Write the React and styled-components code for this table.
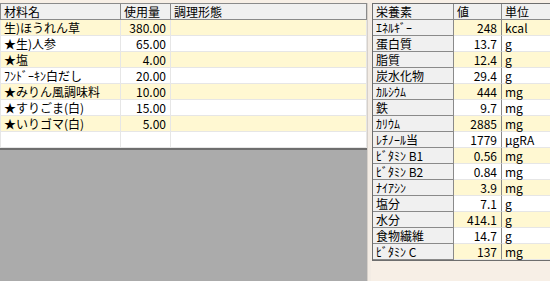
import styled, { createGlobalStyle } from 'styled-components';

const ingredients = [
  { name: '生)ほうれん草', amount: '380.00' },
  { name: '★生)人参', amount: '65.00' },
  { name: '★塩', amount: '4.00' },
  { name: 'ﾌﾝﾄﾞｰｷﾝ白だし', amount: '20.00' },
  { name: '★みりん風調味料', amount: '10.00' },
  { name: '★すりごま(白)', amount: '15.00' },
  { name: '★いりゴマ(白)', amount: '5.00' },
  { name: '', amount: '' },
];

const nutrients = [
  ['ｴﾈﾙｷﾞｰ', '248', 'kcal'],
  ['蛋白質', '13.7', 'g'],
  ['脂質', '12.4', 'g'],
  ['炭水化物', '29.4', 'g'],
  ['ｶﾙｼｳﾑ', '444', 'mg'],
  ['鉄', '9.7', 'mg'],
  ['ｶﾘｳﾑ', '2885', 'mg'],
  ['ﾚﾁﾉｰﾙ当', '1779', 'μgRA'],
  ['ﾋﾞﾀﾐﾝ B1', '0.56', 'mg'],
  ['ﾋﾞﾀﾐﾝ B2', '0.84', 'mg'],
  ['ﾅｲｱｼﾝ', '3.9', 'mg'],
  ['塩分', '7.1', 'g'],
  ['水分', '414.1', 'g'],
  ['食物繊維', '14.7', 'g'],
  ['ﾋﾞﾀﾐﾝ C', '137', 'mg'],
];

const GlobalStyle = createGlobalStyle`
  html, body {
    margin: 0;
    padding: 0;
    background: #f7efe6;
  }
  body {
    font-family: "Noto Sans CJK JP", "Liberation Sans", sans-serif;
    font-size: 12px;
    color: #000;
  }
`;

const App = () => (
  <>
    <GlobalStyle />
    <Window>
      <LeftPane>
        <Grid>
          <GridRow>
            <HeadCell>材料名</HeadCell>
            <HeadCell>使用量</HeadCell>
            <HeadCell>調理形態</HeadCell>
          </GridRow>
          {ingredients.map((item, i) => (
            <GridRow key={i}>
              <Cell stripe={i % 2 === 0 && item.name}>{item.name}</Cell>
              <NumCell stripe={i % 2 === 0 && item.name}>{item.amount}</NumCell>
              <Cell stripe={i % 2 === 0 && item.name} />
            </GridRow>
          ))}
        </Grid>
      </LeftPane>
      <Splitter />
      <RightPane>
        <NutTable>
          <NutRow>
            <NutHead>栄養素</NutHead>
            <NutHead>値</NutHead>
            <NutHead>単位</NutHead>
          </NutRow>
          {nutrients.map(([label, value, unit], i) => (
            <NutRow key={label}>
              <NutLabel>{label}</NutLabel>
              <NutValue stripe={i % 2 === 0}>{value}</NutValue>
              <NutUnit stripe={i % 2 === 0}>{unit}</NutUnit>
            </NutRow>
          ))}
        </NutTable>
      </RightPane>
    </Window>
  </>
);

const Window = styled.div`
  display: flex;
  width: 550px;
  height: 281px;
  padding-top: 3px;
  box-sizing: border-box;
  overflow: hidden;
`;

const LeftPane = styled.div`
  width: 367px;
  flex: none;
  background: #ababab;
`;

const Grid = styled.div`
  background: #fff;
  border-bottom: 2px solid #6e6e6e;
`;

const GridRow = styled.div`
  display: grid;
  grid-template-columns: 121px 50px 1fr;
  height: 16px;
  &:first-child {
    height: 17px;
  }
`;

const HeadCell = styled.div`
  background: #f0f0f0;
  border: 1px solid #8a8a8a;
  border-left: none;
  padding-left: 3px;
  line-height: 15px;
  white-space: nowrap;
  overflow: hidden;
  &:first-child {
    border-left: 1px solid #8a8a8a;
  }
`;

const Cell = styled.div`
  background: ${(props) => (props.stripe ? '#fff8d2' : '#fff')};
  border-right: 1px solid #e6e6e6;
  border-bottom: 1px solid #e6e6e6;
  padding-left: 3px;
  line-height: 15px;
  white-space: nowrap;
  overflow: hidden;
  &:first-child {
    border-left: 1px solid #e6e6e6;
  }
`;

const NumCell = styled(Cell)`
  text-align: right;
  padding: 0 4px 0 0;
`;

const Splitter = styled.div`
  width: 3px;
  flex: none;
  background: #f3ece4;
  border-left: 1px solid #d6d0ca;
`;

const RightPane = styled.div`
  flex: 1;
  padding-left: 1px;
`;

const NutTable = styled.div`
  border: 1px solid #6e6e6e;
  border-right: none;
  width: 190px;
`;

const NutRow = styled.div`
  display: grid;
  grid-template-columns: 81px 48px 1fr;
  height: 16px;
  &:first-child {
    height: 16px;
  }
`;

const NutHead = styled.div`
  background: #f0f0f0;
  border-right: 1px solid #8a8a8a;
  border-bottom: 1px solid #8a8a8a;
  padding-left: 3px;
  line-height: 15px;
  white-space: nowrap;
`;

const NutLabel = styled(NutHead)`
  font-size: 12px;
`;

const NutValue = styled.div`
  background: ${(props) => (props.stripe ? '#fff8d2' : '#fff')};
  border-right: 1px solid #8a8a8a;
  border-bottom: 1px solid #e6e6e6;
  text-align: right;
  padding-right: 4px;
  line-height: 15px;
  white-space: nowrap;
`;

const NutUnit = styled(NutValue)`
  text-align: left;
  padding: 0 0 0 3px;
  border-right: none;
`;

export default App;
